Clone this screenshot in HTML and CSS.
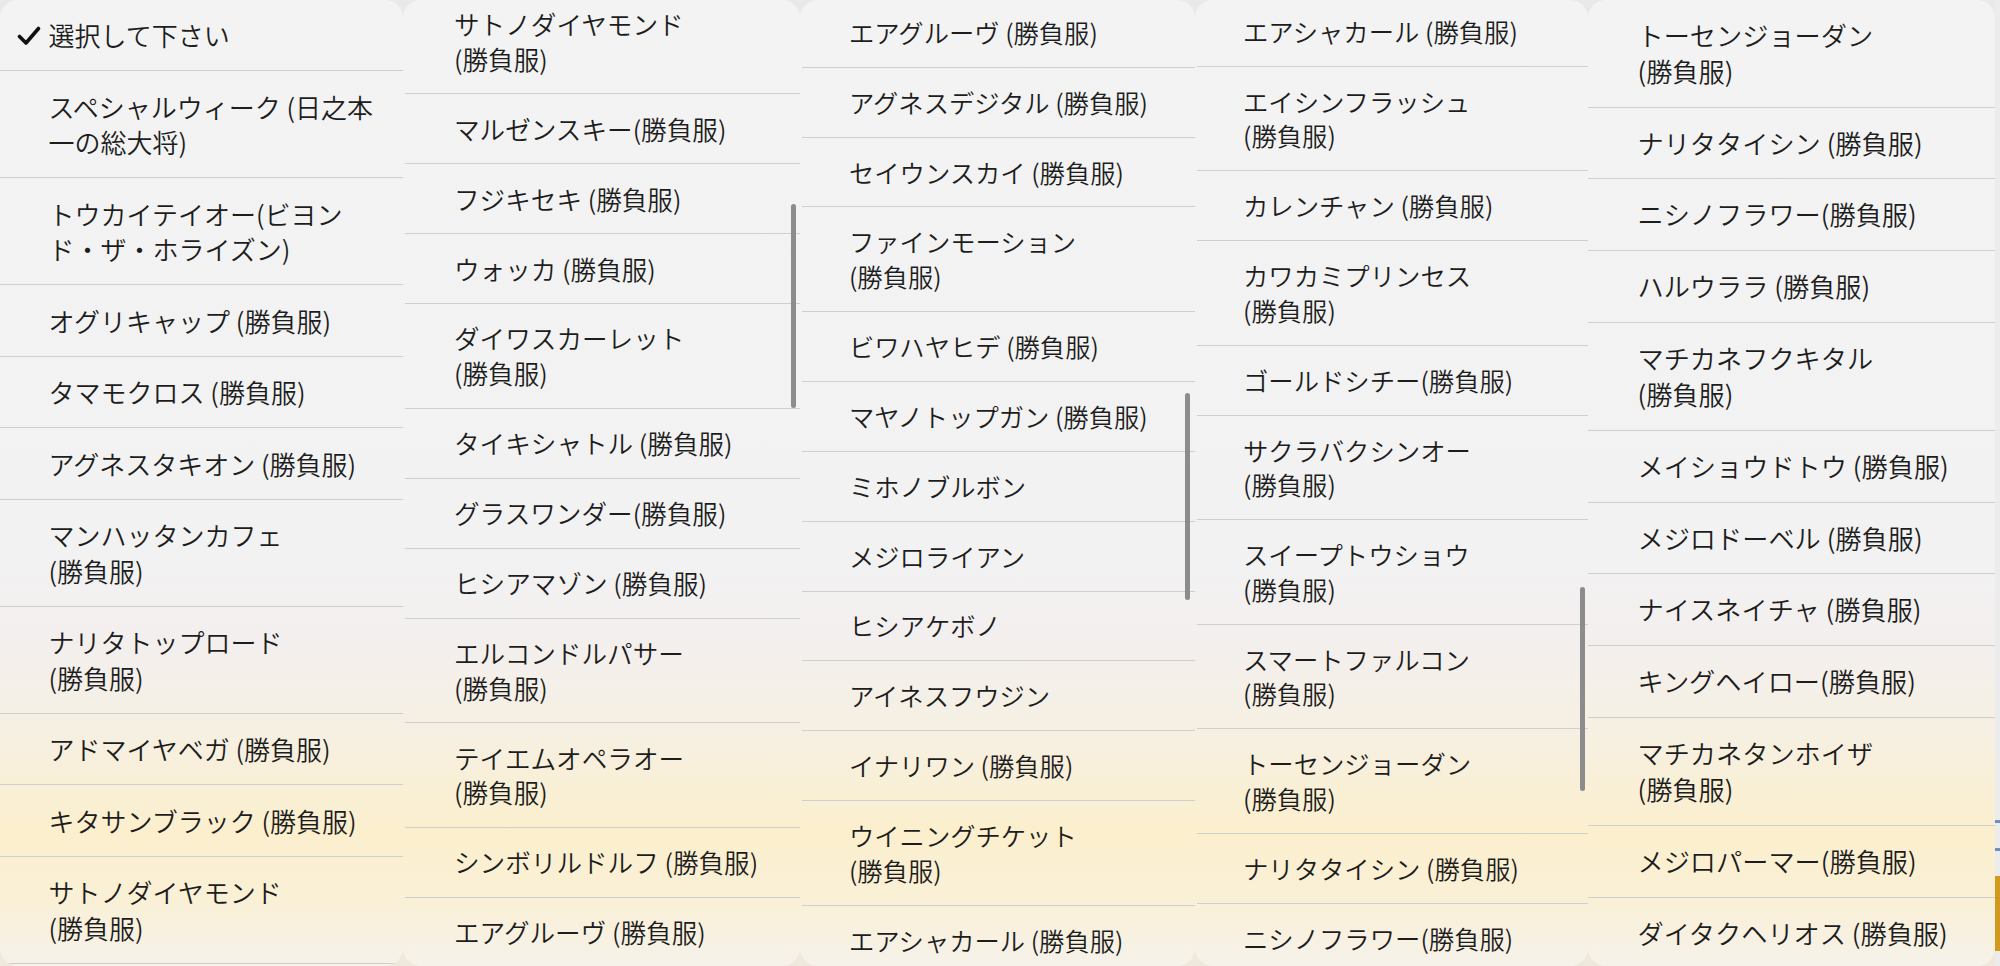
FILE: index.html
```html
<!DOCTYPE html>
<html lang="ja">
<head>
<meta charset="utf-8">
<title>選択メニュー</title>
<link rel="stylesheet" href="styles.css">
</head>
<body>
<div class="board">
  <section class="panel p1">
    <ul class="list">
      <li class="item selected"><svg class="check" viewBox="0 0 24 20" width="24" height="20"><path d="M2.5 10.5 L9 17 L21.5 2.5" fill="none" stroke="#111" stroke-width="3.6" stroke-linecap="round" stroke-linejoin="round"/></svg>選択して下さい</li>
      <li class="item">スペシャルウィーク (日之本<br>一の総大将)</li>
      <li class="item">トウカイテイオー(ビヨン<br>ド・ザ・ホライズン)</li>
      <li class="item">オグリキャップ (勝負服)</li>
      <li class="item">タマモクロス (勝負服)</li>
      <li class="item">アグネスタキオン (勝負服)</li>
      <li class="item">マンハッタンカフェ<br>(勝負服)</li>
      <li class="item">ナリタトップロード<br>(勝負服)</li>
      <li class="item">アドマイヤベガ (勝負服)</li>
      <li class="item">キタサンブラック (勝負服)</li>
      <li class="item">サトノダイヤモンド<br>(勝負服)</li>
    </ul>
  </section>
  <section class="panel p2">
    <ul class="list">
      <li class="item">サトノダイヤモンド<br>(勝負服)</li>
      <li class="item">マルゼンスキー(勝負服)</li>
      <li class="item">フジキセキ (勝負服)</li>
      <li class="item">ウォッカ (勝負服)</li>
      <li class="item">ダイワスカーレット<br>(勝負服)</li>
      <li class="item">タイキシャトル (勝負服)</li>
      <li class="item">グラスワンダー(勝負服)</li>
      <li class="item">ヒシアマゾン (勝負服)</li>
      <li class="item">エルコンドルパサー<br>(勝負服)</li>
      <li class="item">テイエムオペラオー<br>(勝負服)</li>
      <li class="item">シンボリルドルフ (勝負服)</li>
      <li class="item">エアグルーヴ (勝負服)</li>
    </ul>
    <div class="scrollbar"></div>
  </section>
  <section class="panel p3">
    <ul class="list">
      <li class="item">エアグルーヴ (勝負服)</li>
      <li class="item">アグネスデジタル (勝負服)</li>
      <li class="item">セイウンスカイ (勝負服)</li>
      <li class="item">ファインモーション<br>(勝負服)</li>
      <li class="item">ビワハヤヒデ (勝負服)</li>
      <li class="item">マヤノトップガン (勝負服)</li>
      <li class="item">ミホノブルボン</li>
      <li class="item">メジロライアン</li>
      <li class="item">ヒシアケボノ</li>
      <li class="item">アイネスフウジン</li>
      <li class="item">イナリワン (勝負服)</li>
      <li class="item">ウイニングチケット<br>(勝負服)</li>
      <li class="item">エアシャカール (勝負服)</li>
    </ul>
    <div class="scrollbar"></div>
  </section>
  <section class="panel p4">
    <ul class="list">
      <li class="item">エアシャカール (勝負服)</li>
      <li class="item">エイシンフラッシュ<br>(勝負服)</li>
      <li class="item">カレンチャン (勝負服)</li>
      <li class="item">カワカミプリンセス<br>(勝負服)</li>
      <li class="item">ゴールドシチー(勝負服)</li>
      <li class="item">サクラバクシンオー<br>(勝負服)</li>
      <li class="item">スイープトウショウ<br>(勝負服)</li>
      <li class="item">スマートファルコン<br>(勝負服)</li>
      <li class="item">トーセンジョーダン<br>(勝負服)</li>
      <li class="item">ナリタタイシン (勝負服)</li>
      <li class="item">ニシノフラワー(勝負服)</li>
    </ul>
    <div class="scrollbar"></div>
  </section>
  <section class="panel p5">
    <ul class="list">
      <li class="item">トーセンジョーダン<br>(勝負服)</li>
      <li class="item">ナリタタイシン (勝負服)</li>
      <li class="item">ニシノフラワー(勝負服)</li>
      <li class="item">ハルウララ (勝負服)</li>
      <li class="item">マチカネフクキタル<br>(勝負服)</li>
      <li class="item">メイショウドトウ (勝負服)</li>
      <li class="item">メジロドーベル (勝負服)</li>
      <li class="item">ナイスネイチャ (勝負服)</li>
      <li class="item">キングヘイロー(勝負服)</li>
      <li class="item">マチカネタンホイザ<br>(勝負服)</li>
      <li class="item">メジロパーマー(勝負服)</li>
      <li class="item">ダイタクヘリオス (勝負服)</li>
    </ul>
  </section>
  <div class="edge">
    <span class="edge-a"></span>
    <span class="edge-b"></span>
    <span class="edge-c"></span>
    <span class="edge-d"></span>
  </div>
</div>
</body>
</html>
```

FILE: styles.css
```css
* { box-sizing: border-box; }

html, body {
  margin: 0;
  padding: 0;
  height: 100%;
}

body {
  width: 2000px;
  height: 966px;
  overflow: hidden;
  font-family: "Noto Sans CJK JP", "Noto Sans", sans-serif;
  color: #1d1d1d;
  background: linear-gradient(180deg, #e9e9e9 0%, #ebebeb 70%, #f4e6c2 88%, #efe9dd 100%);
}

.board {
  display: flex;
  height: 966px;
}

.panel {
  position: relative;
  height: 966px;
  overflow: hidden;
  border-radius: 18px;
  background: linear-gradient(180deg, #f3f3f3 0%, #f2f2f2 58%, #f3efee 66%, #f6f0e2 76%, #fbefcd 86%, #faf0d6 93%, #f6f2ea 100%);
}

.p1 { width: 403px; --fs: 26px; --lh: 35.5px; --pad: 17.5px; --indent: 48.5px; --shift: -0.5px; }
.p2 { width: 397px; --fs: 25.6px; --lh: 34.6px; --pad: 17.2px; --indent: 49px; --shift: -10.2px; }
.p3 { width: 395px; --fs: 25.3px; --lh: 35px; --pad: 16.92px; --indent: 47px; --shift: -2px; }
.p4 { width: 393px; --fs: 25.35px; --lh: 34.7px; --pad: 17.08px; --indent: 46px; --shift: -3.2px; }
.p5 { width: 407px; --fs: 26.2px; --lh: 36.5px; --pad: 17.1px; --indent: 49.5px; --shift: -0.5px; }

.p2 .list, .p3 .list, .p4 .list { margin-left: 2px; }

.list {
  list-style: none;
  margin: var(--shift) 0 0 0;
  padding: 0;
}

.item {
  position: relative;
  font-size: var(--fs);
  font-weight: 350;
  line-height: var(--lh);
  padding: var(--pad) 12px var(--pad) var(--indent);
  border-bottom: 1px solid #cfcfcf;
  white-space: nowrap;
}

.check {
  position: absolute;
  left: 17px;
  top: 26px;
}

.scrollbar {
  position: absolute;
  width: 5px;
  border-radius: 3px;
  background: #8c8c8c;
}

.p2 .scrollbar { left: 388px; top: 204px; height: 204px; }
.p3 .scrollbar { left: 385px; top: 393px; height: 207px; }
.p4 .scrollbar { left: 385px; top: 587px; height: 204px; }

.edge {
  width: 5px;
  height: 966px;
  display: flex;
  flex-direction: column;
  background: #ececec;
}

.edge-a { height: 380px; }
.edge-b { height: 3px; margin-top: 440px; background: #6f8fc0; }
.edge-c { height: 3px; margin-top: 25px; background: #6f8fc0; }
.edge-d { height: 75px; margin-top: 25px; background: #d19a1e; }
```
